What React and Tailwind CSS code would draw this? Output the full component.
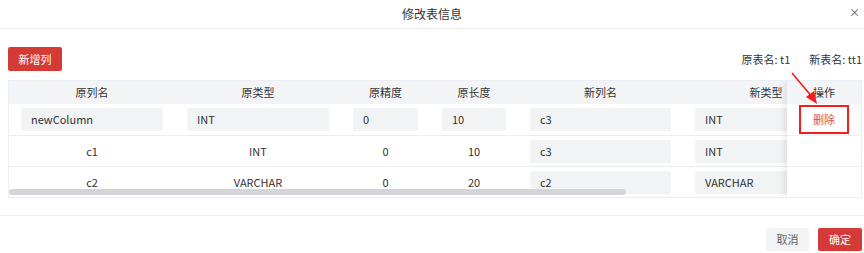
import React from 'react';

const columns = [
    { key: 'oldName', label: '原列名', w: 'w-[166px]' },
    { key: 'oldType', label: '原类型', w: 'w-[166px]' },
    { key: 'oldScale', label: '原精度', w: 'w-[89px]' },
    { key: 'oldLen', label: '原长度', w: 'w-[88px]' },
    { key: 'newName', label: '新列名', w: 'w-[165px]' },
    { key: 'newType', label: '新类型', w: 'w-[166px]' },
];

const rows = [
    { h: 'h-[32px]', editable: true, oldName: 'newColumn', oldType: 'INT', oldScale: '0', oldLen: '10', newName: 'c3', newType: 'INT' },
    { h: 'h-[31px]', editable: false, oldName: 'c1', oldType: 'INT', oldScale: '0', oldLen: '10', newName: 'c3', newType: 'INT' },
    { h: 'h-[31px]', editable: false, oldName: 'c2', oldType: 'VARCHAR', oldScale: '0', oldLen: '20', newName: 'c2', newType: 'VARCHAR' },
];

const alwaysInput = ['newName', 'newType'];

const Field = ({ value }) => (
    <div className="h-[23px] w-full bg-[#f2f3f5] rounded-[2px] pl-[10px] flex items-center text-[#303133]">
        {value}
    </div>
);

const App = () => {
    return (
        <div className="relative w-[864px] h-[253px] bg-white flex flex-col font-['Noto_Sans_CJK_SC',sans-serif] text-[11px] text-[#333]">
            {/* Header */}
            <div className="relative h-[29px] border-b border-[#eeeeee] flex items-center justify-center">
                <span className="text-[12px] text-[#333]">修改表信息</span>
                <span className="absolute right-[4px] top-[7px] text-[11px] text-[#555] leading-none">×</span>
            </div>

            {/* Body */}
            <div className="pl-[8px] pr-[2px] pt-[18px]">
                <div className="flex items-center justify-between h-[24px]">
                    <button className="w-[54px] h-[24px] bg-[#d43a36] text-white text-[11px] rounded-[2px]">新增列</button>
                    <div className="flex items-center gap-[19px] text-[#333]">
                        <span>原表名: t1</span>
                        <span>新表名: tt1</span>
                    </div>
                </div>

                {/* Table */}
                <div className="relative mt-[9px] border border-[#ebeef5] border-b-0 overflow-hidden">
                    <div className="w-max pr-[330px]">
                        <div className="flex h-[23px] bg-[#f3f4f6] text-[#333]">
                            {columns.map((c) => (
                                <div key={c.key} className={`${c.w} shrink-0 flex items-center justify-center`}>{c.label}</div>
                            ))}
                        </div>
                        {rows.map((r, i) => (
                            <div key={i} className={`flex ${r.h} border-b border-[#ebeef5] items-center`}>
                                {columns.map((c) => (
                                    <div key={c.key} className={`${c.w} shrink-0 px-[12px] flex items-center justify-center`}>
                                        {(r.editable || alwaysInput.includes(c.key)) ? (
                                            <Field value={r[c.key]} />
                                        ) : (
                                            <span className="text-[#303133]">{r[c.key]}</span>
                                        )}
                                    </div>
                                ))}
                            </div>
                        ))}
                    </div>

                    {/* Scrollbar */}
                    <div className="absolute left-0 bottom-[3px] h-[6px] w-[617px] rounded-full bg-[#d3d5da]" />

                    {/* Fixed operation column */}
                    <div className="absolute right-0 top-0 bottom-0 w-[74px] bg-white shadow-[-4px_0_6px_rgba(0,0,0,0.07)] flex flex-col">
                        <div className="h-[23px] bg-[#f3f4f6] flex items-center justify-center">操作</div>
                        <div className="h-[32px] border-b border-[#ebeef5] flex items-center justify-center">
                            <div className="w-[50px] h-[29px] border-2 border-[#f01e1e] flex items-center justify-center text-[#e0524c]">删除</div>
                        </div>
                        <div className="h-[31px] border-b border-[#ebeef5]" />
                        <div className="h-[31px] border-b border-[#ebeef5]" />
                    </div>
                </div>
            </div>

            {/* Footer */}
            <div className="mt-[17px] border-t border-[#eeeeee] flex justify-end gap-[9px] pt-[12px] pr-[2px]">
                <button className="w-[43px] h-[23px] bg-[#f2f3f5] text-[#606266] text-[11px] rounded-[2px]">取消</button>
                <button className="w-[44px] h-[23px] bg-[#d43a36] text-white text-[11px] rounded-[2px]">确定</button>
            </div>

            {/* Annotation arrow */}
            <svg className="absolute left-0 top-0 pointer-events-none" width="864" height="253">
                <line x1="792" y1="73" x2="813" y2="98" stroke="#f01e1e" strokeWidth="1.6" />
                <polygon points="817,104 806,97 814,91" fill="#f01e1e" />
            </svg>
        </div>
    );
};

export default App;
